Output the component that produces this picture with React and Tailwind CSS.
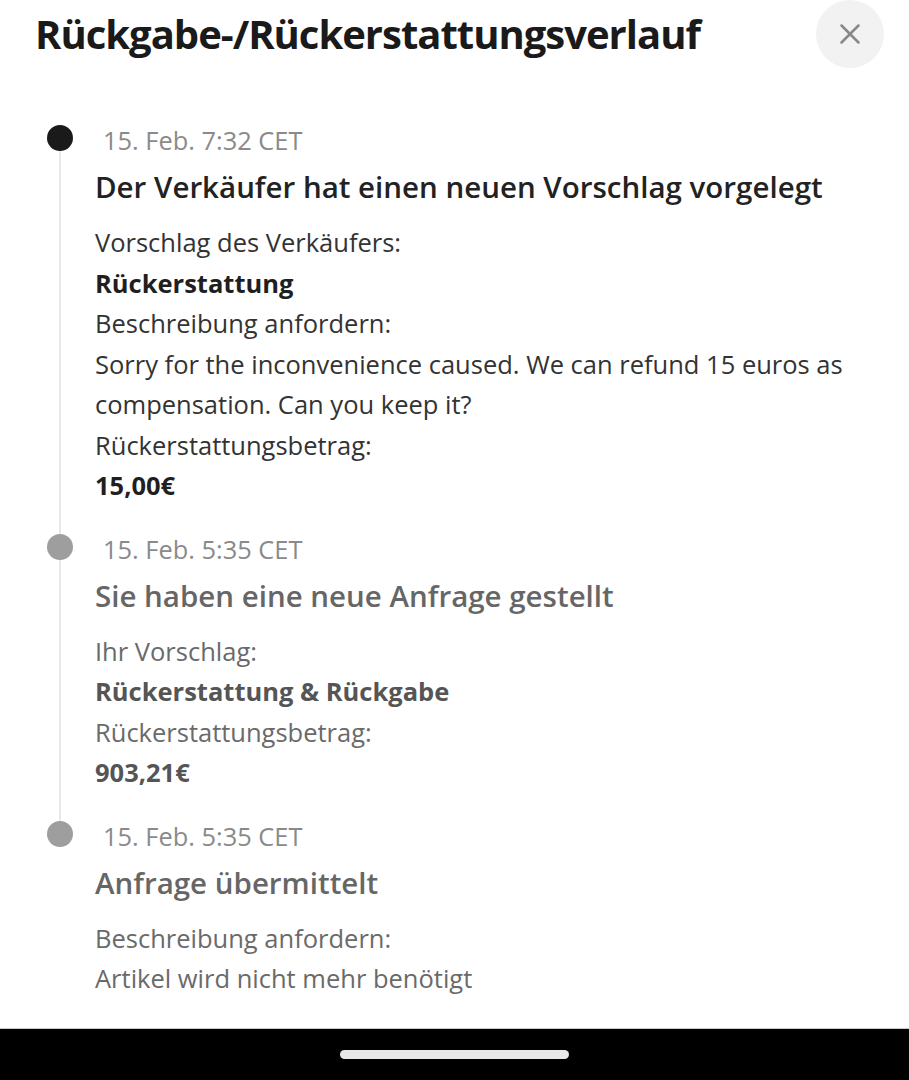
import { X } from "lucide-react";

const entries = [
  {
    date: "15. Feb. 7:32 CET",
    title: "Der Verkäufer hat einen neuen Vorschlag vorgelegt",
    active: true,
    lines: [
      { text: "Vorschlag des Verkäufers:" },
      { text: "Rückerstattung", bold: true },
      { text: "Beschreibung anfordern:" },
      {
        text: "Sorry for the inconvenience caused. We can refund 15 euros as compensation. Can you keep it?",
      },
      { text: "Rückerstattungsbetrag:" },
      { text: "15,00€", bold: true },
    ],
  },
  {
    date: "15. Feb. 5:35 CET",
    title: "Sie haben eine neue Anfrage gestellt",
    lines: [
      { text: "Ihr Vorschlag:" },
      { text: "Rückerstattung & Rückgabe", bold: true },
      { text: "Rückerstattungsbetrag:" },
      { text: "903,21€", bold: true },
    ],
  },
  {
    date: "15. Feb. 5:35 CET",
    title: "Anfrage übermittelt",
    lines: [
      { text: "Beschreibung anfordern:" },
      { text: "Artikel wird nicht mehr benötigt" },
    ],
  },
];

const TimelineItem = ({ entry, last }) => {
  const { active } = entry;
  return (
    <div className="flex">
      <div className="mr-[22px] flex w-[26px] flex-col items-center">
        <div
          className={`h-[26px] w-[26px] shrink-0 rounded-full ${
            active ? "bg-[#1a1a1a]" : "bg-[#9e9e9e]"
          }`}
        />
        {!last && <div className="w-[2px] flex-1 bg-[#e8e8e8]" />}
      </div>

      <div className={`flex-1 pr-[30px] ${last ? "" : "pb-[28px]"}`}>
        <p className="pl-[8px] text-[25.4px] leading-[30px] text-[#8a8a8a]">
          {entry.date}
        </p>
        <h3
          className={`mt-[14px] text-[29.5px] font-semibold leading-[36px] ${
            active ? "text-[#222]" : "text-[#666]"
          }`}
        >
          {entry.title}
        </h3>
        <div
          className={`mt-[17px] text-[25.5px] leading-[40.5px] ${
            active ? "text-[#333]" : "text-[#6a6a6a]"
          }`}
        >
          {entry.lines.map((line, i) => (
            <p
              key={i}
              className={
                line.bold
                  ? `font-bold ${active ? "text-[#1f1f1f]" : "text-[#555]"}`
                  : ""
              }
            >
              {line.text}
            </p>
          ))}
        </div>
      </div>
    </div>
  );
}

export default function App() {
  return (
    <div className="flex h-[1080px] w-[909px] flex-col bg-white font-['Open_Sans',sans-serif]">
      <div className="flex h-[68px] items-center justify-between pl-[35px] pr-[25px]">
        <h1 className="text-[40px] font-bold tracking-[-0.025em] text-[#1a1a1a]">
          Rückgabe-/Rückerstattungsverlauf
        </h1>
        <button
          className="flex h-[68px] w-[68px] items-center justify-center rounded-full bg-[#f2f2f2]"
          aria-label="Schließen"
        >
          <X className="h-[34px] w-[34px] text-[#888]" strokeWidth={1.8} />
        </button>
      </div>

      <div className="mt-[57px] flex-1 pl-[47px]">
        {entries.map((entry, i) => (
          <TimelineItem key={i} entry={entry} last={i === entries.length - 1} />
        ))}
      </div>

      <div className="flex h-[52px] items-center justify-center border-t border-[#c8c8c8] bg-black">
        <div className="h-[9px] w-[229px] rounded-full bg-[#e8e8e8]" />
      </div>
    </div>
  );
}
